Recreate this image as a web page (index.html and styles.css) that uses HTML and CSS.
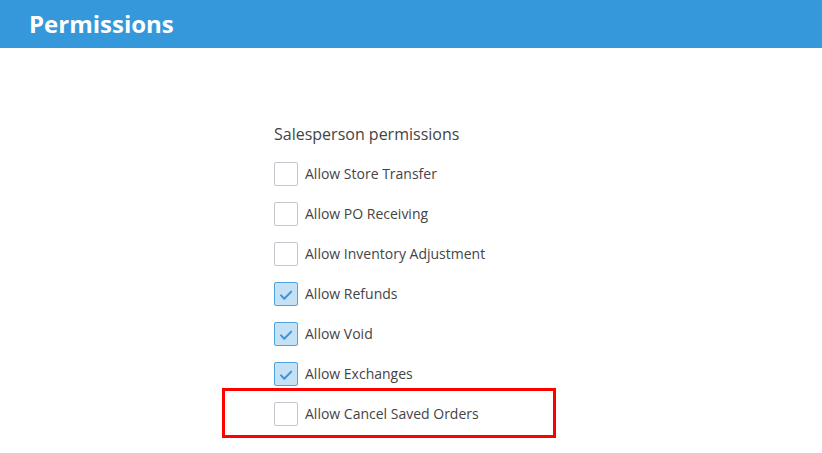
FILE: index.html
```
<!DOCTYPE html>
<html>
<head>
<meta charset="utf-8">
<link rel="stylesheet" href="styles.css">
</head>
<body>
<header class="topbar"><h1 class="title">Permissions</h1></header>
<main class="content">
  <section class="perms">
    <h2 class="perms-title">Salesperson permissions</h2>
    <ul class="list">
      <li class="row"><span class="box"></span><span class="label">Allow Store Transfer</span></li>
      <li class="row"><span class="box"></span><span class="label">Allow PO Receiving</span></li>
      <li class="row"><span class="box"></span><span class="label">Allow Inventory Adjustment</span></li>
      <li class="row"><span class="box checked"><svg viewBox="0 0 24 24" width="24" height="24"><path d="M7 13.4l3.3 3.3L17.2 9.6" fill="none" stroke="#3a95d8" stroke-width="2" stroke-linecap="round" stroke-linejoin="round"/></svg></span><span class="label">Allow Refunds</span></li>
      <li class="row"><span class="box checked"><svg viewBox="0 0 24 24" width="24" height="24"><path d="M7 13.4l3.3 3.3L17.2 9.6" fill="none" stroke="#3a95d8" stroke-width="2" stroke-linecap="round" stroke-linejoin="round"/></svg></span><span class="label">Allow Void</span></li>
      <li class="row"><span class="box checked"><svg viewBox="0 0 24 24" width="24" height="24"><path d="M7 13.4l3.3 3.3L17.2 9.6" fill="none" stroke="#3a95d8" stroke-width="2" stroke-linecap="round" stroke-linejoin="round"/></svg></span><span class="label">Allow Exchanges</span></li>
      <li class="row highlight"><span class="box"></span><span class="label">Allow Cancel Saved Orders</span><span class="redbox"></span></li>
    </ul>
  </section>
</main>
</body>
</html>
```
FILE: styles.css
```
* { box-sizing: border-box; }
html, body { margin: 0; padding: 0; background: #fff; }
body { font-family: "Open Sans", "Liberation Sans", sans-serif; color: #444; min-height: 453px; }
.topbar { height: 48px; background: #3498db; display: flex; align-items: center; padding-left: 29px; }
.title { margin: 0; font-size: 24px; font-weight: 700; color: #fff; line-height: 1; }
.content { padding: 75px 0 28px 274px; }
.perms-title { margin: 0 0 17px; font-size: 16px; font-weight: 400; color: #444; line-height: 22px; }
.list { list-style: none; margin: 0; padding: 0; display: flex; flex-direction: column; gap: 16px; }
.row { display: flex; align-items: center; gap: 7px; height: 24px; position: relative; }
.box { width: 24px; height: 24px; border: 1px solid #c6c6cc; border-radius: 2px; background: #fff; flex: none; display: flex; align-items: center; justify-content: center; }
.box svg { display: block; margin: -1px; }
.box.checked { background: #c5e1f6; border-color: #4fa3dc; }
.label { font-size: 14px; color: #444; line-height: 20px; }
.redbox { position: absolute; left: -52px; top: -14px; width: 334px; height: 50px; border: 3px solid #f00; }
```
